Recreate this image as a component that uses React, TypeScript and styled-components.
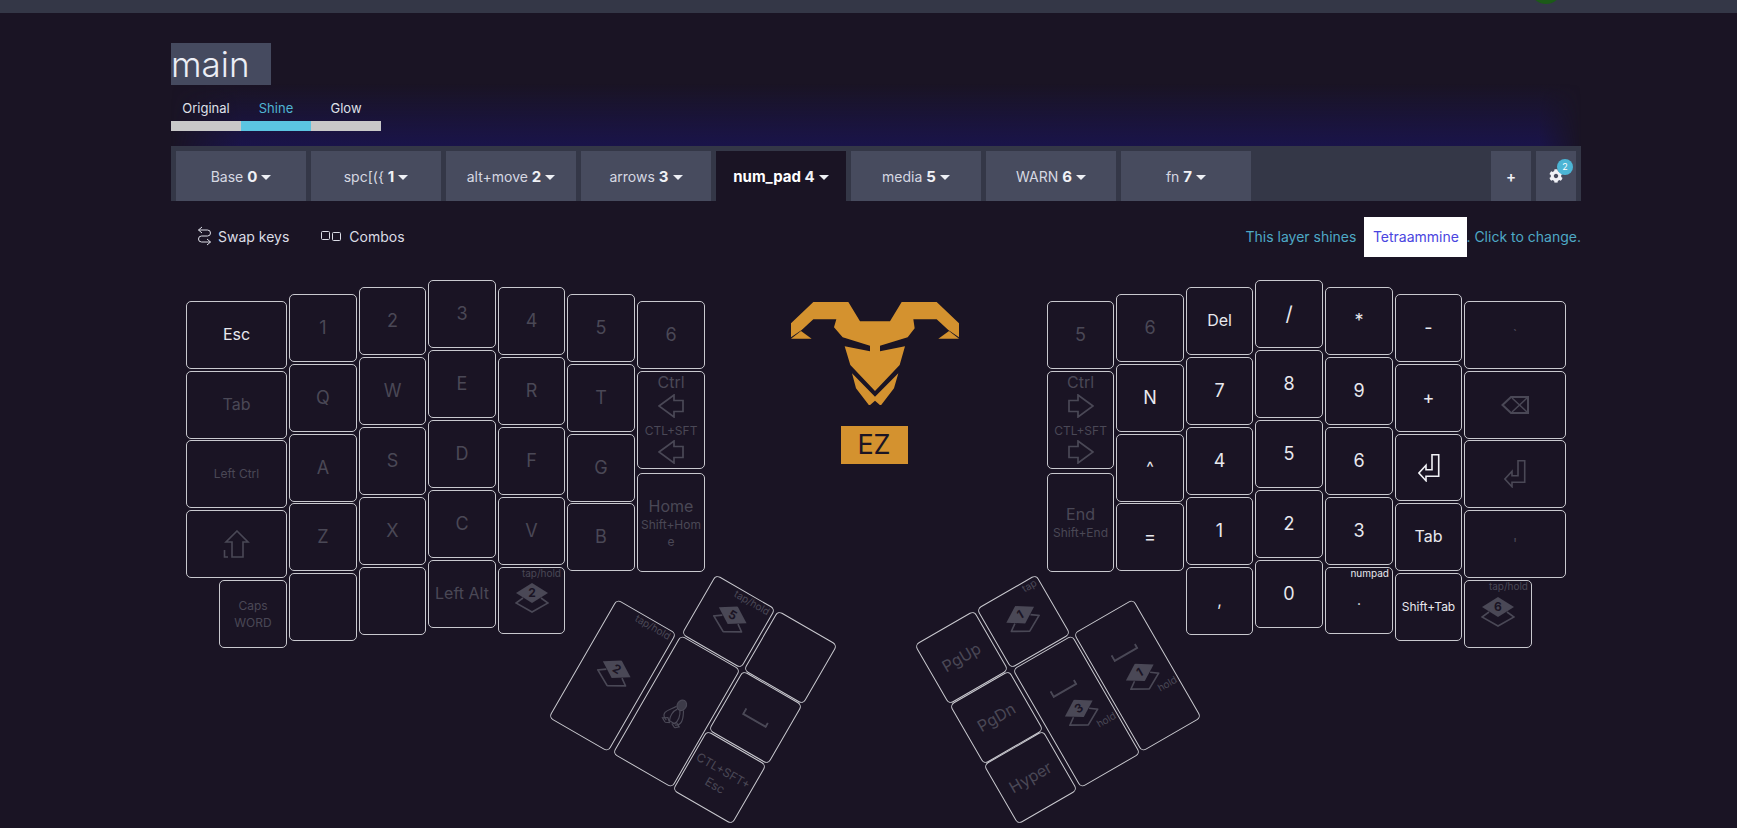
import React from 'react';
import styled, { createGlobalStyle } from 'styled-components';
import { FaCog } from 'react-icons/fa';

const DIM = '#4a4856';
const BG = '#1a1424';
const CANVAS_TOP = 265;

const Global = createGlobalStyle`
  html, body { margin: 0; padding: 0; background: ${BG}; overflow: hidden; }
  * { box-sizing: border-box; }
`;

const Page = styled.div`
  width: 1737px;
  height: 828px;
  overflow: hidden;
  background: ${BG};
  color: #e6e7ee;
  font-family: Inter, 'Noto Sans', sans-serif;
  font-size: 14px;
`;

const TopBar = styled.header`
  position: relative;
  height: 13px;
  background: #343747;
  overflow: hidden;
`;

const Avatar = styled.span`
  position: absolute;
  left: 1530px;
  top: -28px;
  width: 32px;
  height: 32px;
  border-radius: 50%;
  background: #1c5a18;
`;

const Content = styled.section`
  padding: 30px 156px 0 171px;
`;

const TitleBox = styled.div`
  position: relative;
  z-index: 1;
  width: 100px;
  height: 42px;
  background: #454a5f;
  font-size: 35px;
  font-weight: 300;
  line-height: 42px;
  color: #eceef5;
`;

const Segments = styled.div`
  position: relative;
  z-index: 1;
  display: grid;
  grid-template-columns: repeat(3, 70px);
  width: 210px;
  margin-top: 13px;
`;

const Segment = styled.div<{ $on?: boolean }>`
  display: flex;
  flex-direction: column;
  align-items: center;
  font-size: 13px;
  line-height: 20px;
  color: ${(p) => (p.$on ? '#4fb4d3' : '#dfe0e8')};
  &::after {
    content: '';
    display: block;
    width: 100%;
    height: 10px;
    margin-top: 3px;
    background: ${(p) => (p.$on ? '#5bc5e2' : '#c8c8c8')};
  }
`;

const TabBar = styled.nav`
  position: relative;
  display: flex;
  gap: 5px;
  height: 55px;
  margin-top: 15px;
  padding: 5px 5px 0;
  background: #343747;
  &::before {
    content: '';
    position: absolute;
    left: 0;
    right: 0;
    bottom: 100%;
    height: 62px;
    background: linear-gradient(to top, #1a144a, rgba(26, 20, 74, 0));
    mask-image: linear-gradient(to right, transparent, #000 5%, #000 97%, transparent);
  }
`;

const Tab = styled.div<{ $active?: boolean }>`
  display: flex;
  align-items: center;
  justify-content: center;
  width: 130px;
  height: 50px;
  background: ${(p) => (p.$active ? BG : '#474b5e')};
  color: ${(p) => (p.$active ? '#ffffff' : '#d6d8e2')};
  font-size: ${(p) => (p.$active ? 15 : 14)}px;
  font-weight: ${(p) => (p.$active ? 700 : 400)};
  white-space: pre;
  b { font-size: 15px; font-weight: 700; color: #f0f1f6; }
`;

const Caret = styled.i`
  display: inline-block;
  width: 0;
  height: 0;
  margin-left: 4px;
  margin-top: 2px;
  border-left: 5px solid transparent;
  border-right: 5px solid transparent;
  border-top: 5px solid #eef0f5;
`;

const TabActions = styled.div`
  display: flex;
  gap: 5px;
  margin-left: auto;
`;

const IconTab = styled.div`
  position: relative;
  display: flex;
  align-items: center;
  justify-content: center;
  width: 40px;
  height: 50px;
  background: #474b5e;
  color: #f0f1f6;
  font-size: 15px;
  font-weight: 600;
`;

const Badge = styled.span`
  position: absolute;
  left: 21px;
  top: 8px;
  width: 16px;
  height: 16px;
  border-radius: 50%;
  background: #4cb5d5;
  color: #fff;
  font-size: 9px;
  font-weight: 400;
  line-height: 16px;
  text-align: center;
`;

const Toolbar = styled.div`
  display: flex;
  align-items: center;
  justify-content: space-between;
  height: 40px;
  margin-top: 16px;
  padding-left: 26px;
`;

const ToolGroup = styled.div`
  display: flex;
  align-items: center;
  gap: 32px;
  padding-bottom: 2px;
`;

const ToolButton = styled.div<{ $gap: number }>`
  display: flex;
  align-items: center;
  gap: ${(p) => p.$gap}px;
  color: #dcdde6;
`;

const ShineNote = styled.div`
  display: flex;
  align-items: center;
  color: #4ea9c6;
  white-space: pre;
  line-height: 38px;
`;

const ColorChip = styled.span`
  display: flex;
  align-items: center;
  justify-content: center;
  width: 103px;
  height: 40px;
  margin-left: 8px;
  margin-right: -1px;
  background: #ffffff;
  color: #4a45e0;
`;

const Canvas = styled.main`
  position: relative;
  height: ${828 - CANVAS_TOP}px;
  margin-top: 7px;
`;

const KeyCap = styled.div<{ $x: number; $y: number; $w: number; $h: number; $rot?: number; $bright?: boolean }>`
  position: absolute;
  left: ${(p) => p.$x}px;
  top: ${(p) => p.$y - CANVAS_TOP}px;
  width: ${(p) => p.$w}px;
  height: ${(p) => p.$h}px;
  padding: 2px;
  display: flex;
  flex-direction: column;
  align-items: center;
  justify-content: center;
  text-align: center;
  border: 1px solid #c9c9cf;
  border-radius: 5px;
  color: ${(p) => (p.$bright ? '#e8e8ee' : DIM)};
  transform: ${(p) => (p.$rot ? `rotate(${p.$rot}deg)` : 'none')};
`;

const Legend = styled.span<{ $size?: number }>`
  font-size: ${(p) => p.$size ?? 18}px;
  line-height: 1.2;
`;

const SubLegend = styled.span`
  font-size: 12px;
  line-height: 17px;
  word-break: break-all;
`;

const CornerTag = styled.span`
  position: absolute;
  right: 3px;
  top: -1px;
  font-size: 10px;
  line-height: 12px;
`;

const HoldTag = styled.span`
  position: absolute;
  left: 45px;
  top: 83px;
  font-size: 10px;
  line-height: 12px;
`;

const HoldStack = styled.div`
  display: flex;
  flex-direction: column;
  align-items: center;
  gap: 11px;
  margin-bottom: 8px;
  & > svg:last-child {
    margin-left: 6px;
  }
`;

const ArrowStack = styled(KeyCap)`
  justify-content: flex-start;
  padding-top: 0;
`;

const ArrowLabel = styled.span`
  font-size: 16px;
  line-height: 20px;
`;

const ArrowSub = styled.span`
  margin: 6px 0 0;
  font-size: 12px;
  line-height: 14px;
  white-space: nowrap;
`;

const ArrowGlyph = styled.svg`
  margin-top: 2px;
  flex: none;
`;

const LayerGlyph = styled.svg`
  margin-bottom: 5px;
  flex: none;
`;

const LogoBlock = styled.div`
  position: absolute;
  left: 775px;
  top: ${281 - CANVAS_TOP}px;
  width: 200px;
  display: flex;
  flex-direction: column;
  align-items: center;
`;

const EzPlate = styled.div`
  width: 67px;
  height: 38px;
  margin-top: 21px;
  margin-right: 2px;
  background: #d4922f;
  color: ${BG};
  font-size: 27px;
  line-height: 38px;
  text-align: center;
`;

const Layer = ({ n }: { n: number }) => (
  <LayerGlyph width="34" height="30" viewBox="0 0 34 30">
    <path d="M8 15 L1 20 L17 29 L33 20 L26 15" fill="none" stroke={DIM} strokeWidth="1.6" />
    <polygon points="17,0 33,10 17,20 1,10" fill={DIM} />
    <text x="17" y="14" textAnchor="middle" fontSize="12" fontWeight="700" fontFamily="Inter, sans-serif" fill={BG}>
      {n}
    </text>
  </LayerGlyph>
);

const LeftArrow = () => (
  <ArrowGlyph width="26" height="24" viewBox="0 0 26 24">
    <polygon points="1,12 16,1 16,6.5 25,6.5 25,17.5 16,17.5 16,23" fill="none" stroke={DIM} strokeWidth="1.7" />
  </ArrowGlyph>
);

const RightArrow = () => (
  <ArrowGlyph width="26" height="24" viewBox="0 0 26 24">
    <polygon points="25,12 10,1 10,6.5 1,6.5 1,17.5 10,17.5 10,23" fill="none" stroke={DIM} strokeWidth="1.7" />
  </ArrowGlyph>
);

const SpaceGlyph = () => (
  <svg width="28" height="8" viewBox="0 0 28 8">
    <path d="M1 0 V6.5 H27 V2" fill="none" stroke={DIM} strokeWidth="2" />
  </svg>
);

const EnterGlyph = ({ color }: { color: string }) => (
  <svg width="22" height="28" viewBox="0 0 22 28">
    <polygon
      points="20.7,0.7 20.7,22.3 8,22.3 8,26.7 0.9,19 8,11.3 8,15.7 14,15.7 14,0.7"
      fill="none"
      stroke={color}
      strokeWidth="1.6"
    />
  </svg>
);

const Tux = () => (
  <svg width="26" height="30" viewBox="0 0 26 30" fill="none" stroke={DIM} strokeWidth="1.2">
    <ellipse cx="14" cy="6.5" rx="4.5" ry="5.5" fill={DIM} fillOpacity="0.75" />
    <path d="M10 10 C8 14 4 17 3 21 C2.5 24 5 26 8 27" />
    <path d="M18 10 C20 14 22 17 22 21 C22 24 20 26 18 27" />
    <path d="M12 12 C9 16 9 22 11 26 H17 C19 22 18 16 15 12" />
    <path d="M8 24 L3.5 27 L8 29.5 L12 27.5 Z" />
    <path d="M18 24 L22.5 26.5 L19 29.5 L15 27.5 Z" />
  </svg>
);

type Plain = { x: number; y: number; w: number; h?: number; t?: string; s?: number; b?: boolean };

const LC = [186, 289, 359, 428, 498, 567, 637];
const LW = [101, 68, 67, 68, 67, 68, 68];
const RC = [1047, 1116, 1186, 1255, 1325, 1395, 1464];
const RW = [67, 68, 67, 68, 68, 67, 102];
const Y0 = [302, 372, 441, 511, 581];
const Y1 = [295, 365, 435, 504, 574];
const Y2 = [288, 358, 428, 498, 568];
const Y3 = [281, 351, 421, 491, 561];

const column = (x: number, w: number, ys: number[], cells: [string, number?, boolean?][]): Plain[] =>
  cells.map(([t, s, b], i) => ({ x, w, y: ys[i], t, s, b }));

const plainKeys: Plain[] = [
  ...column(LC[0], LW[0], Y0, [['Esc', 16, true], ['Tab', 16], ['Left Ctrl', 12]]),
  ...column(LC[1], LW[1], Y1, [['1'], ['Q'], ['A'], ['Z'], ['']]),
  ...column(LC[2], LW[2], Y2, [['2'], ['W'], ['S'], ['X'], ['']]),
  ...column(LC[3], LW[3], Y3, [['3'], ['E'], ['D'], ['C'], ['Left Alt', 16]]),
  ...column(LC[4], LW[4], Y2, [['4'], ['R'], ['F'], ['V']]),
  ...column(LC[5], LW[5], Y1, [['5'], ['T'], ['G'], ['B']]),
  { x: LC[6], y: 302, w: LW[6], t: '6' },

  { x: RC[0], y: 302, w: RW[0], t: '5' },
  ...column(RC[1], RW[1], Y1, [['6'], ['N', 18, true], ['^', 16, true], ['=', 18, true]]),
  ...column(RC[2], RW[2], Y2, [['Del', 16, true], ['7', 18, true], ['4', 18, true], ['1', 18, true], [',', 16, true]]),
  ...column(RC[3], RW[3], Y3, [['/', 20, true], ['8', 18, true], ['5', 18, true], ['2', 18, true], ['0', 18, true]]),
  ...column(RC[4], RW[4], Y2, [['*', 18, true], ['9', 18, true], ['6', 18, true], ['3', 18, true]]),
  ...column(RC[5], RW[5], Y1, [['-', 18, true], ['+', 18, true]]),
  { x: RC[5], y: 504, w: RW[5], t: 'Tab', s: 16, b: true },
  { x: RC[5], y: 574, w: RW[5], t: 'Shift+Tab', s: 12, b: true },
  { x: RC[6], y: 302, w: RW[6], t: '`', s: 14 },
  { x: RC[6], y: 511, w: RW[6], t: "'", s: 14 },
];

type Thumb = { cx: number; cy: number; big?: boolean; rot: number; children?: React.ReactNode };

const ThumbKey = ({ cx, cy, big, rot, children }: Thumb) => {
  const w = 69;
  const h = big ? 137 : 69;
  return (
    <KeyCap $x={cx - w / 2} $y={cy - h / 2} $w={w} $h={h} $rot={rot}>
      {children}
    </KeyCap>
  );
};

const tabs: [string, number][] = [
  ['Base', 0],
  ['spc[({', 1],
  ['alt+move', 2],
  ['arrows', 3],
  ['num_pad', 4],
  ['media', 5],
  ['WARN', 6],
  ['fn', 7],
];

export default function App() {
  return (
    <Page>
      <Global />
      <TopBar>
        <Avatar />
      </TopBar>
      <Content>
        <TitleBox>main</TitleBox>
        <Segments>
          <Segment>Original</Segment>
          <Segment $on>Shine</Segment>
          <Segment>Glow</Segment>
        </Segments>
        <TabBar>
          {tabs.map(([name, n]) => (
            <Tab key={n} $active={n === 4}>
              {name} <b>{n}</b>
              <Caret />
            </Tab>
          ))}
          <TabActions>
            <IconTab>+</IconTab>
            <IconTab>
              <FaCog size={14} />
              <Badge>2</Badge>
            </IconTab>
          </TabActions>
        </TabBar>
        <Toolbar>
          <ToolGroup>
            <ToolButton $gap={6}>
              <svg width="15" height="20" viewBox="0 0 15 20" fill="none" stroke="#dcdde6" strokeWidth="1">
                <path d="M5 1 L1.5 4 L5 7" />
                <path d="M1.5 4 H10.5 a3 3 0 0 1 0 6 H4.5 a3 3 0 0 0 0 6 H13.5" />
                <path d="M10 13 L13.5 16 L10 19" />
              </svg>
              Swap keys
            </ToolButton>
            <ToolButton $gap={8}>
              <svg width="20" height="10" viewBox="0 0 20 10" fill="none" stroke="#dcdde6" strokeWidth="1">
                <rect x="0.5" y="0.5" width="8" height="8" rx="1" />
                <rect x="11.5" y="1.5" width="8" height="8" rx="1" />
              </svg>
              Combos
            </ToolButton>
          </ToolGroup>
          <ShineNote>
            This layer shines
            <ColorChip>Tetraammine</ColorChip>. Click to change.
          </ShineNote>
        </Toolbar>
      </Content>
      <Canvas>
        {plainKeys.map((k, i) => (
          <KeyCap key={i} $x={k.x} $y={k.y} $w={k.w} $h={68} $bright={k.b}>
            <Legend $size={k.s}>{k.t}</Legend>
          </KeyCap>
        ))}

        <KeyCap $x={LC[0]} $y={511} $w={LW[0]} $h={68}>
          <svg width="28" height="28" viewBox="0 0 28 28" fill="none" stroke={DIM} strokeWidth="1.6">
            <polygon points="14,1 25,12 20,12 20,27 9,27 9,12 3,12" />
            <path d="M1.5 20 V27 H5" />
          </svg>
        </KeyCap>
        <KeyCap $x={219} $y={581} $w={68} $h={68}>
          <SubLegend>
            Caps
            <br />
            WORD
          </SubLegend>
        </KeyCap>
        <KeyCap $x={LC[4]} $y={568} $w={LW[4]} $h={67}>
          <CornerTag>tap/hold</CornerTag>
          <Layer n={2} />
        </KeyCap>
        <ArrowStack $x={LC[6]} $y={372} $w={LW[6]} $h={98}>
          <ArrowLabel>Ctrl</ArrowLabel>
          <LeftArrow />
          <ArrowSub>CTL+SFT</ArrowSub>
          <LeftArrow />
        </ArrowStack>
        <KeyCap $x={LC[6]} $y={474} $w={LW[6]} $h={99}>
          <ArrowLabel>Home</ArrowLabel>
          <SubLegend>Shift+Home</SubLegend>
        </KeyCap>

        <ArrowStack $x={RC[0]} $y={372} $w={RW[0]} $h={98}>
          <ArrowLabel>Ctrl</ArrowLabel>
          <RightArrow />
          <ArrowSub>CTL+SFT</ArrowSub>
          <RightArrow />
        </ArrowStack>
        <KeyCap $x={RC[0]} $y={474} $w={RW[0]} $h={99}>
          <ArrowLabel>End</ArrowLabel>
          <SubLegend>Shift+End</SubLegend>
        </KeyCap>
        <KeyCap $x={RC[4]} $y={568} $w={RW[4]} $h={67} $bright>
          <CornerTag>numpad</CornerTag>
          <Legend $size={14}>.</Legend>
        </KeyCap>
        <KeyCap $x={RC[5]} $y={435} $w={RW[5]} $h={67} $bright>
          <EnterGlyph color="#f1f1f5" />
        </KeyCap>
        <KeyCap $x={RC[6]} $y={372} $w={RW[6]} $h={68}>
          <svg width="28" height="18" viewBox="0 0 28 18" fill="none" stroke={DIM} strokeWidth="2">
            <polygon points="1.5,9 10,1 27,1 27,17 10,17" />
            <path d="M11 2 L26 16 M26 2 L11 16" strokeWidth="1.5" />
          </svg>
        </KeyCap>
        <KeyCap $x={RC[6]} $y={441} $w={RW[6]} $h={68}>
          <EnterGlyph color={DIM} />
        </KeyCap>
        <KeyCap $x={RC[6]} $y={581} $w={68} $h={68}>
          <CornerTag>tap/hold</CornerTag>
          <Layer n={6} />
        </KeyCap>

        <ThumbKey cx={612.8} cy={676.3} big rot={30}>
          <CornerTag>tap/hold</CornerTag>
          <Layer n={2} />
        </ThumbKey>
        <ThumbKey cx={676.7} cy={712.3} big rot={30}>
          <Tux />
        </ThumbKey>
        <ThumbKey cx={728.3} cy={622.3} rot={30}>
          <CornerTag>tap/hold</CornerTag>
          <Layer n={5} />
        </ThumbKey>
        <ThumbKey cx={790} cy={658.3} rot={30} />
        <ThumbKey cx={755} cy={718.7} rot={30}>
          <SpaceGlyph />
        </ThumbKey>
        <ThumbKey cx={719.5} cy={778.7} rot={30}>
          <SubLegend>
            CTL+SFT+
            <br />
            Esc
          </SubLegend>
        </ThumbKey>

        <ThumbKey cx={961.5} cy={658.3} rot={-30}>
          <Legend $size={16}>PgUp</Legend>
        </ThumbKey>
        <ThumbKey cx={1023.7} cy={622.5} rot={-30}>
          <CornerTag>tap</CornerTag>
          <Layer n={1} />
        </ThumbKey>
        <ThumbKey cx={996.7} cy={718.7} rot={-30}>
          <Legend $size={16}>PgDn</Legend>
        </ThumbKey>
        <ThumbKey cx={1030.3} cy={778.7} rot={-30}>
          <Legend $size={16}>Hyper</Legend>
        </ThumbKey>
        <ThumbKey cx={1076.7} cy={712.5} big rot={-30}>
          <HoldStack>
            <SpaceGlyph />
            <Layer n={3} />
          </HoldStack>
          <HoldTag>hold</HoldTag>
        </ThumbKey>
        <ThumbKey cx={1137.5} cy={676} big rot={-30}>
          <HoldStack>
            <SpaceGlyph />
            <Layer n={1} />
          </HoldStack>
          <HoldTag>hold</HoldTag>
        </ThumbKey>

        <LogoBlock>
          <svg width="200" height="125" viewBox="15 0 600 375" fill="#d4922f">
            <polygon points="63,130 130,66 235,66 270,124 360,124 395,66 500,66 567,130 567,172 535,150 500,118 430,118 434,145 413,172 330,197 330,214 405,199 389,255 315,333 241,255 224,199 300,214 300,197 218,172 192,142 199,118 130,118 95,150 63,172" />
            <polygon points="63,176 93,153 125,176" />
            <polygon points="505,176 537,153 567,176" />
            <polygon points="246,280 315,350 385,280 372,325 332,377 315,362 298,377 258,325" />
          </svg>
          <EzPlate>EZ</EzPlate>
        </LogoBlock>
      </Canvas>
    </Page>
  );
}
